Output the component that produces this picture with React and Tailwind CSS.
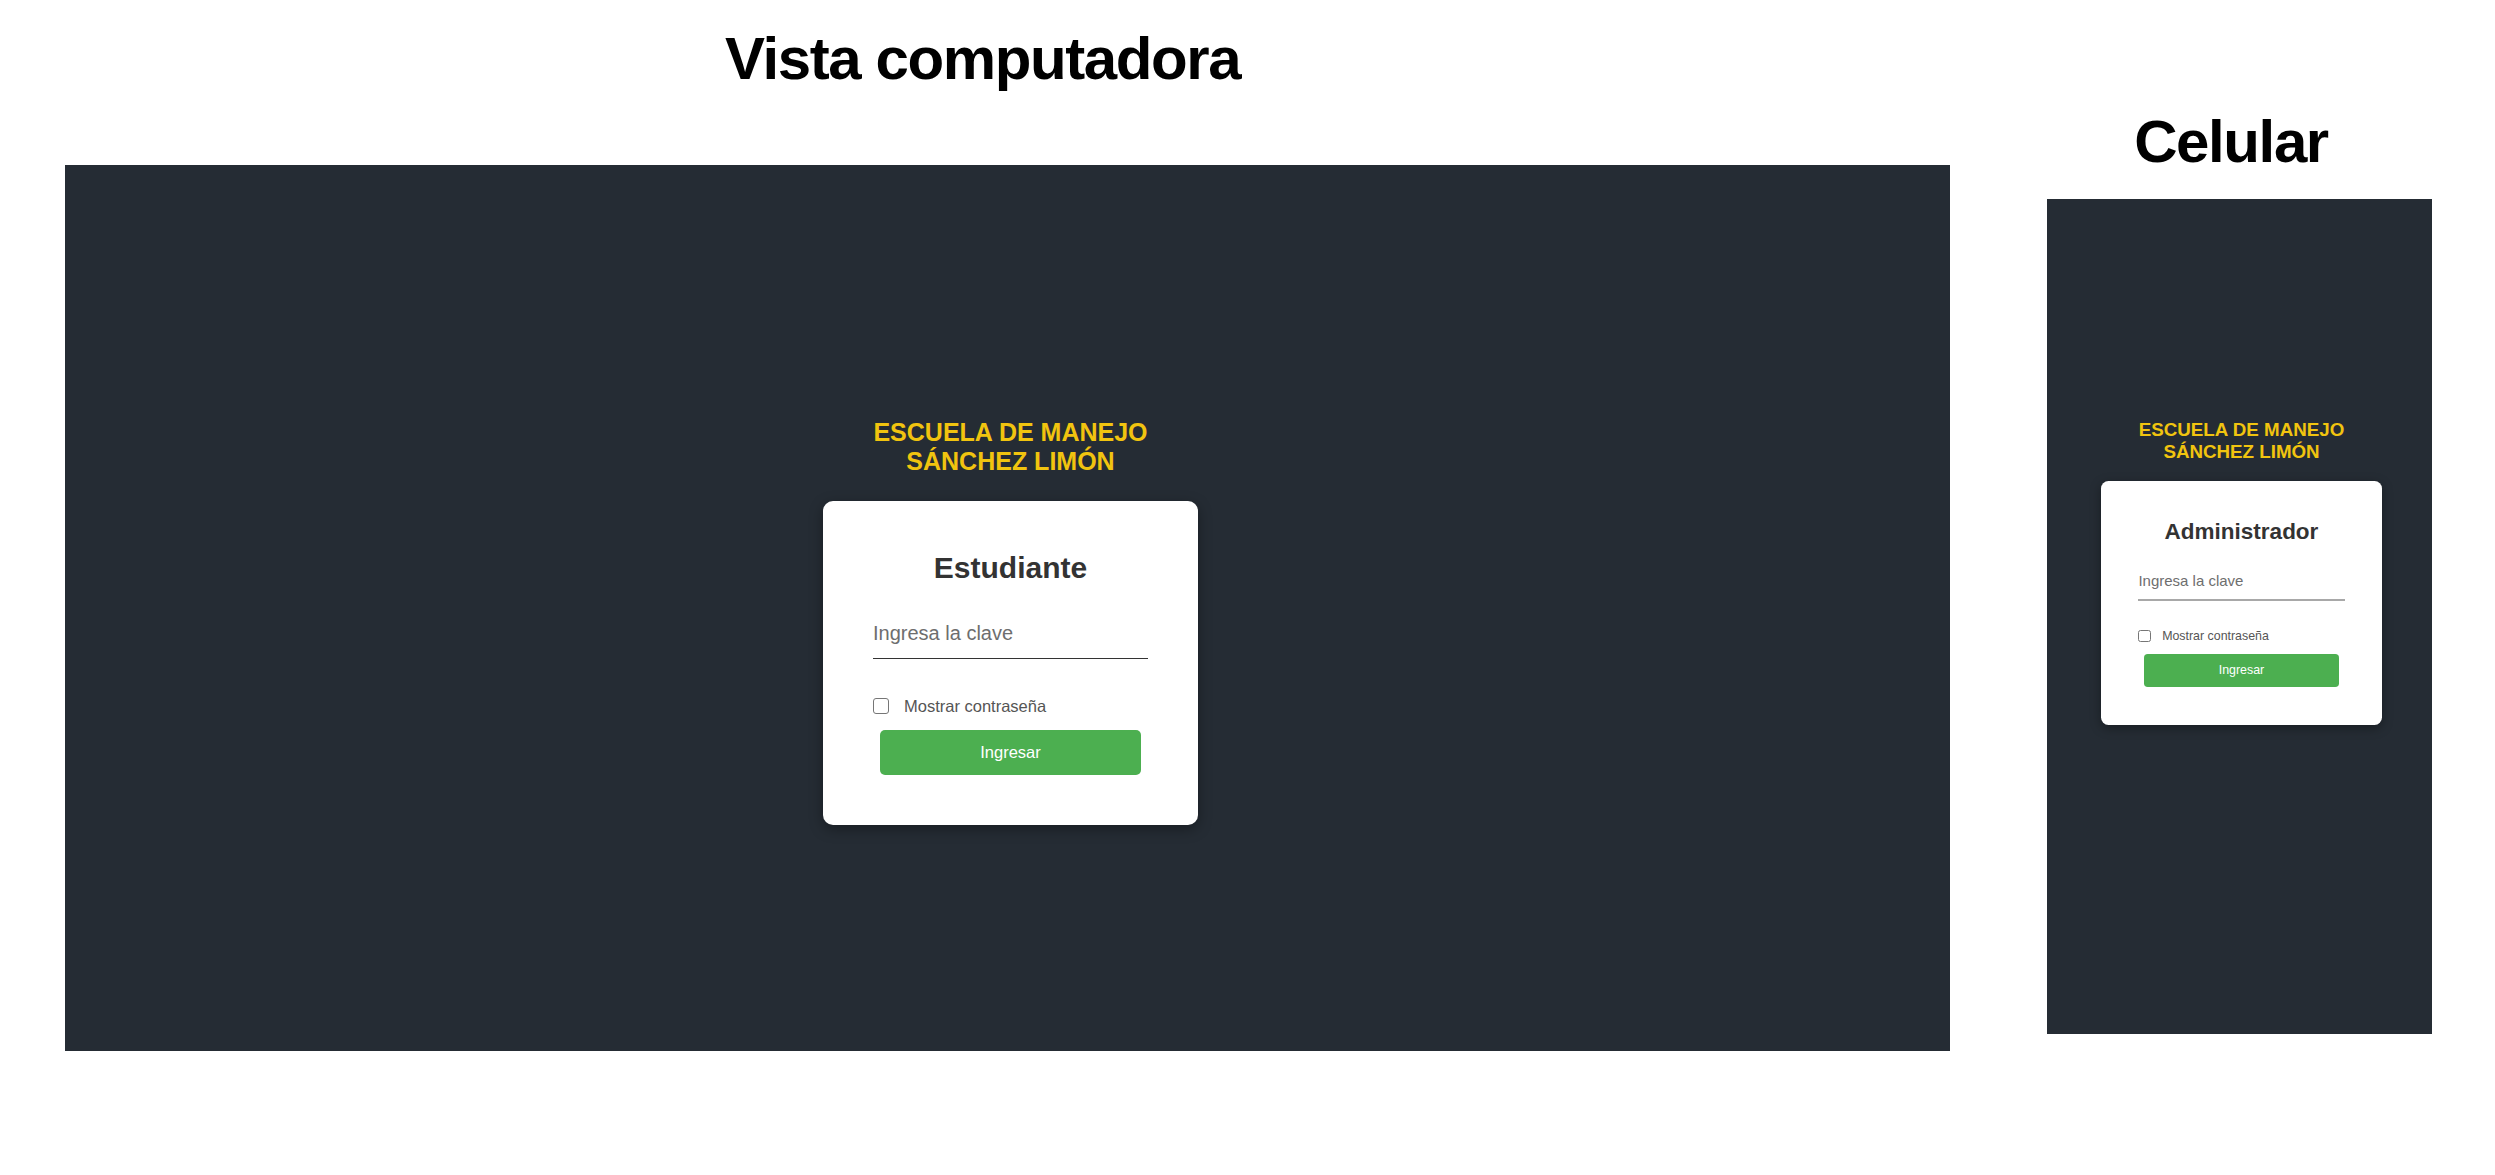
import React from "react";

const FONT = { fontFamily: '"Liberation Sans", Arial, Helvetica, sans-serif' };

const SIZES = {
  desktop: {
    panel: "w-[1885px] h-[886px] pt-[253px] pl-[6px]",
    heading: "text-[25px] leading-[29px]",
    card: "mt-[25px] w-[375px] rounded-[10px] px-[50px] pt-[49px] pb-[50px] shadow-[0_4px_14px_rgba(0,0,0,0.35)]",
    title: "text-[30px] leading-[36px]",
    input: "mt-[36px] text-[20px] leading-[23px] pb-[13px] border-b border-[#333333]",
    row: "mt-[39px] gap-[15px] text-[16.5px] leading-[16px]",
    box: "w-[16px] h-[16px] rounded-[3px] border-[1.5px]",
    button: "mt-[16px] h-[45px] rounded-[5px] text-[16.5px]",
  },
  mobile: {
    panel: "w-[385px] h-[835px] pt-[220px] pl-[4px]",
    heading: "text-[18.75px] leading-[21.75px]",
    card: "mt-[18.75px] w-[281.25px] rounded-[7.5px] px-[37.5px] pt-[36.75px] pb-[37.5px] shadow-[0_3px_11px_rgba(0,0,0,0.35)]",
    title: "text-[22.5px] leading-[27px]",
    input: "mt-[27px] text-[15px] leading-[17.25px] pb-[9.75px] border-b-2 border-[#a8a8a8]",
    row: "mt-[28.5px] gap-[11.25px] text-[12.4px] leading-[12.5px]",
    box: "w-[12.5px] h-[12.5px] rounded-[2.5px] border-[1.25px]",
    button: "mt-[11.5px] h-[33.75px] rounded-[3.75px] text-[12.4px]",
  },
};

function LoginView({ variant, role }) {
  const s = SIZES[variant];
  return (
    <div className={`bg-[#252c34] flex flex-col items-center ${s.panel}`}>
      <h1 className={`text-[#f1c40f] font-bold text-center uppercase ${s.heading}`}>
        Escuela de Manejo
        <br />
        Sánchez Limón
      </h1>
      <div className={`bg-white flex flex-col ${s.card}`}>
        <h2 className={`text-[#333333] font-bold text-center ${s.title}`}>{role}</h2>
        <input
          type="password"
          placeholder="Ingresa la clave"
          className={`w-full bg-transparent outline-none text-[#333333] placeholder:text-[#6e6e6e] px-0 ${s.input}`}
          style={FONT}
        />
        <label className={`flex items-center text-[#555555] ${s.row}`}>
          <span className={`block shrink-0 bg-white border-[#767676] ${s.box}`} />
          <span>Mostrar contraseña</span>
        </label>
        <button
          type="button"
          className={`w-[95%] self-center bg-[#4caf50] text-white flex items-center justify-center ${s.button}`}
          style={FONT}
        >
          Ingresar
        </button>
      </div>
    </div>
  );
}

export default function App() {
  return (
    <div className="w-[2495px] h-[1175px] bg-white overflow-hidden" style={FONT}>
      <div className="flex items-start pl-[65px] gap-[97px]">
        <div className="flex flex-col items-center">
          <h1 className="mt-[29px] pr-[50px] text-[60px] leading-[60px] font-bold tracking-[-1.4px] text-black">
            Vista computadora
          </h1>
          <div className="mt-[76px]">
            <LoginView variant="desktop" role="Estudiante" />
          </div>
        </div>
        <div className="flex flex-col items-center">
          <h1 className="mt-[112px] pr-[17px] text-[60px] leading-[60px] font-bold tracking-[-1.4px] text-black">
            Celular
          </h1>
          <div className="mt-[27px]">
            <LoginView variant="mobile" role="Administrador" />
          </div>
        </div>
      </div>
    </div>
  );
}
